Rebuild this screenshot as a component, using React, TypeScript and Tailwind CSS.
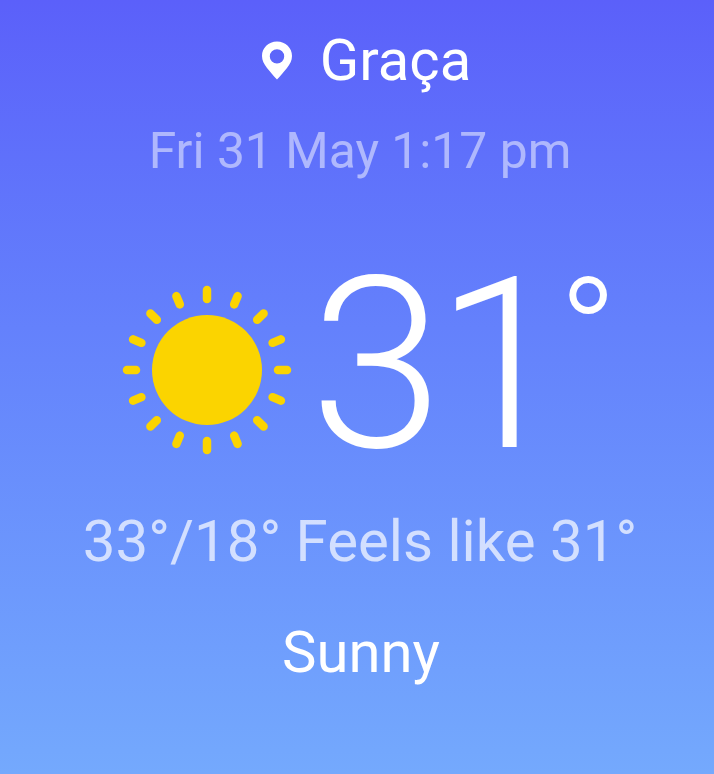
import React from 'react';

const Sun = () => {
    const rays = Array.from({ length: 16 }).map((_, i) => (i * 360) / 16);
    return (
        <svg width="170" height="170" viewBox="0 0 170 170" className="shrink-0">
            <circle cx="85" cy="85" r="55" fill="#FBD400" />
            {rays.map((a) => (
                <line key={a} x1="85" y1="5" x2="85" y2="14" stroke="#FBD400" strokeWidth="8.500" strokeLinecap="round" transform={`rotate(${a} 85 85)`} />
            ))}
        </svg>
    );
};

export default function App() {
    return (
        <div
            className="w-[714px] h-[774px] overflow-hidden flex flex-col items-center pl-[6px] bg-gradient-to-b from-[#5B60FA] to-[#74A9FD] text-white"
            style={{ fontFamily: 'Roboto, sans-serif' }}
        >
            <div className="flex items-center gap-[27px] mt-[26px] h-[68px] ml-[12px]">
                <svg width="32" height="39" viewBox="0 0 32 39">
                    <path fillRule="evenodd" fill="#fff" d="M16 .5C7.300.5 1 7 1 15c0 4.500 2 8 5 12 3 3.700 6.500 8 10 11.500 3.500-3.500 7-7.800 10-11.500 3-4 5-7.500 5-12C31 7 24.700.5 16 .5Zm0 7.700a7.200 7.200 0 1 1 0 14.400 7.200 7.200 0 0 1 0-14.400Z" />
                </svg>
                <span className="text-[58px] leading-none">Graça</span>
            </div>
            <div className="text-[49.800px] leading-none mt-[33px] text-white/50">Fri 31 May 1:17 pm</div>
            <div className="flex items-start mt-[81px] h-[214px] ml-[20px]">
                <div className="mt-[27px] mr-[18px]"><Sun /></div>
                <span className="text-[240px] leading-[214px] font-light tracking-[-8px]">
                    31<span className="text-[158px] leading-[0] tracking-normal ml-[-2px] align-[57px]">°</span>
                </span>
            </div>
            <div className="text-[58.200px] leading-none mt-[40px] text-white/70">33°/18° Feels like 31°</div>
            <div className="text-[58px] leading-none mt-[53px] ml-[2px]">Sunny</div>
        </div>
    );
}
